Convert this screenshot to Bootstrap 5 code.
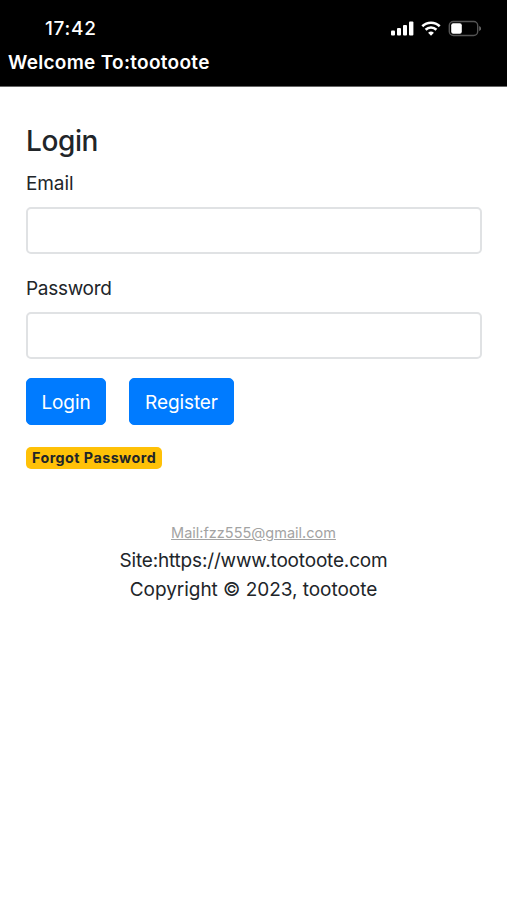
<!DOCTYPE html>
<html lang="en">
<head>
<meta charset="utf-8">
<meta name="viewport" content="width=device-width, initial-scale=1">
<title>Login</title>
<link href="https://cdn.jsdelivr.net/npm/bootstrap@5.3.0/dist/css/bootstrap.min.css" rel="stylesheet">
<style>
body{font-family:Inter,"Liberation Sans",sans-serif;font-size:19px;line-height:29.4px;color:#212529;background:#fff;overflow:hidden}
.top-area{height:87px;background:#000;border-bottom:1px solid #666}
.status-row{height:49px;padding:17px 26px 0 45px}
.clock{font-size:19px;line-height:24px;font-weight:500;letter-spacing:.7px}
.brand-text{font-size:19px;line-height:28px;font-weight:600;padding-left:8px;letter-spacing:.29px}
.page-body{padding:37px 25.5px 0 26px}
.page-title{font-size:28px;line-height:35px;font-weight:500;margin-bottom:10px;letter-spacing:-.4px}
.form-label{display:block;margin-bottom:9px;line-height:29px;letter-spacing:-.3px}
.form-label.label-email{letter-spacing:-.1px}
.form-control{height:47px;border:2px solid #e0e2e4;border-radius:5px}
.field-email{margin-bottom:20px}
.field-password{margin-bottom:19px}
.btn-line{gap:23px}
.btn-primary{--bs-btn-bg:#007bff;--bs-btn-border-color:#007bff;height:47px;border-radius:5px;font-size:19px;line-height:29px;padding:9px 0 7px;letter-spacing:-.1px}
.btn-login{width:80px}
.btn-register{width:105px}
.forgot-line{margin-top:22px}
.badge-forgot{font-size:14.3px;line-height:22px;height:22px;padding:0 5.5px 0 6px;border-radius:5px;background:#ffc107;color:#212529;font-weight:700;letter-spacing:.46px}
footer{margin-top:50px}
.mail-line{height:27px;line-height:26px}
.foot-mail{font-size:14.5px;line-height:26px;color:#a3a3a3;text-decoration:underline}
.site-line{letter-spacing:-.18px}
.copy-line{letter-spacing:-.04px}
</style>
<script src="https://cdn.jsdelivr.net/npm/bootstrap@5.3.0/dist/js/bootstrap.bundle.min.js"></script>
</head>
<body>
<header class="top-area text-white">
  <div class="status-row d-flex justify-content-between align-items-start">
    <span class="clock">17:42</span>
    <svg width="92" height="24" viewBox="389 17 92 24" fill="#fff">
      <rect x="391" y="30.5" width="4" height="5" rx="1"/><rect x="397" y="28" width="4" height="7.5" rx="1"/><rect x="403" y="25" width="4" height="10.5" rx="1"/><rect x="409" y="21.5" width="4.4" height="14" rx="1"/>
      <g fill="none" stroke="#fff" stroke-width="2.6"><path d="M422.3 26.2a12.6 12.6 0 0 1 17.4 0"/><path d="M425.6 29.7a7.8 7.8 0 0 1 10.8 0"/></g>
      <path d="M431 35.8l-2.9-3a4.2 4.2 0 0 1 5.8 0z"/>
      <rect x="449.3" y="21.5" width="28.4" height="14" rx="4" fill="none" stroke="#555" stroke-width="1.4"/>
      <rect x="451.2" y="23.3" width="10.6" height="10.4" rx="2"/>
      <path d="M479.2 26v5q2-1 2-2.5t-2-2.5z" fill="#666"/>
    </svg>
  </div>
  <div class="brand-text">Welcome To:tootoote</div>
</header>
<main class="page-body">
  <h1 class="page-title">Login</h1>
  <form>
    <div class="field-email"><label class="form-label label-email" for="email">Email</label><input class="form-control" id="email" type="email"></div>
    <div class="field-password"><label class="form-label" for="pw">Password</label><input class="form-control" id="pw" type="password"></div>
    <div class="d-flex btn-line"><button type="button" class="btn btn-primary btn-login">Login</button><button type="button" class="btn btn-primary btn-register">Register</button></div>
    <div class="forgot-line d-flex"><span class="badge badge-forgot">Forgot Password</span></div>
  </form>
</main>
<footer class="text-center">
  <div class="mail-line"><a class="foot-mail">Mail:fzz555@gmail.com</a></div>
  <div class="site-line">Site:https://www.tootoote.com</div>
  <div class="copy-line">Copyright © 2023, tootoote</div>
</footer>
</body>
</html>
